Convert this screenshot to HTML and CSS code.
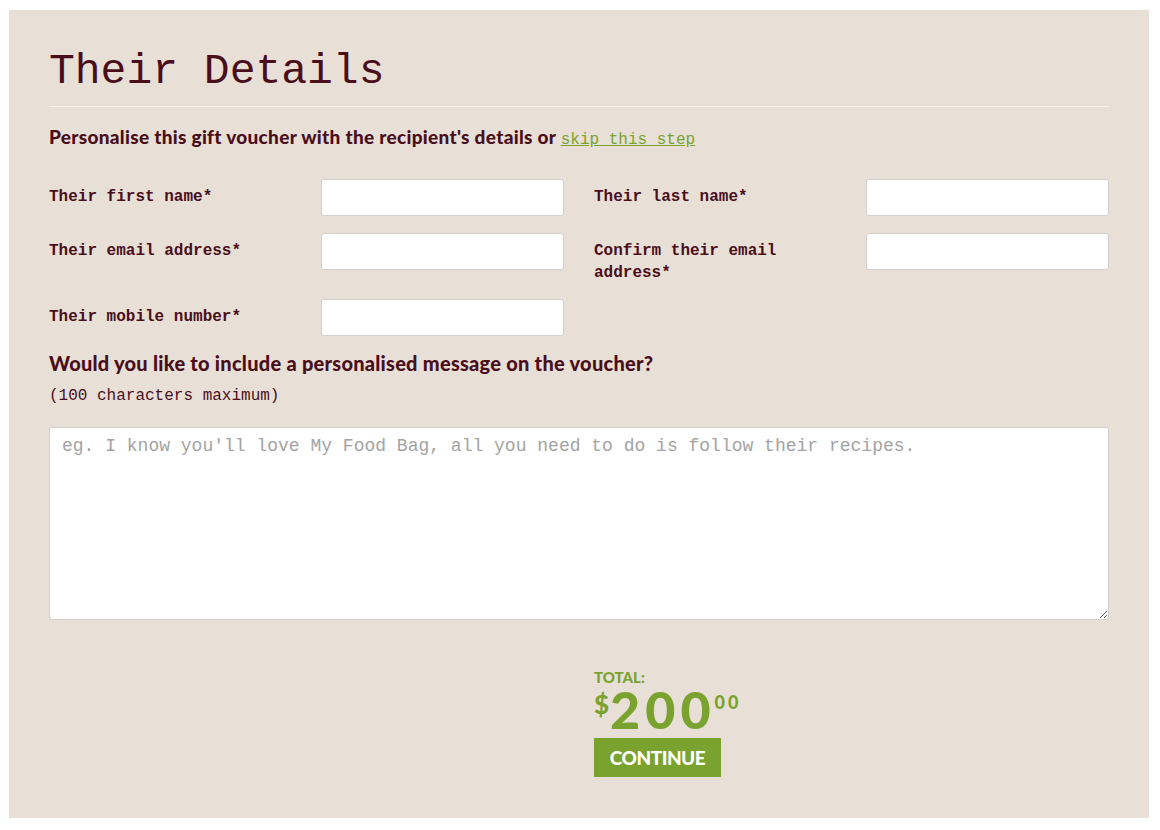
FILE: index.html
```html
<!DOCTYPE html>
<html lang="en">
<head>
    <meta charset="UTF-8">
    <meta name="viewport" content="width=device-width, initial-scale=1.0">
    <title>Their Details</title>
    <link rel="stylesheet" href="styles.css">
</head>
<body>

<div class="panel">
    <h1 class="title">Their Details</h1>
    <p class="intro">Personalise this gift voucher with the recipient's details or <a href="#" class="skip-link">skip this step</a></p>

    <div class="fields">
        <div class="field">
            <label for="first-name">Their first name*</label>
            <input type="text" id="first-name">
        </div>
        <div class="field">
            <label for="last-name">Their last name*</label>
            <input type="text" id="last-name">
        </div>
        <div class="field">
            <label for="email">Their email address*</label>
            <input type="email" id="email">
        </div>
        <div class="field">
            <label for="email-confirm">Confirm their email address*</label>
            <input type="email" id="email-confirm">
        </div>
        <div class="field">
            <label for="mobile">Their mobile number*</label>
            <input type="tel" id="mobile">
        </div>
    </div>

    <h2 class="message-title">Would you like to include a personalised message on the voucher?</h2>
    <p class="hint">(100 characters maximum)</p>
    <textarea class="message" maxlength="100" placeholder="eg. I know you'll love My Food Bag, all you need to do is follow their recipes."></textarea>

    <div class="summary">
        <div class="total-label">TOTAL:</div>
        <div class="price"><span class="currency">$</span><span class="dollars">200</span><span class="cents">00</span></div>
        <button class="continue-button">CONTINUE</button>
    </div>
</div>

</body>
</html>
```

FILE: styles.css
```css
body { margin: 0; padding: 10px 11px 12px 9px; background: #fff; font-family: "Liberation Mono", "Courier New", monospace; color: #4a0e1b; }
.panel { background: #e8e0d6; padding: 40px 40px 41px; }
.title { font-family: "Liberation Mono", "Courier New", monospace; font-weight: normal; font-size: 43px; line-height: 44px; margin: 0; padding-bottom: 12px; border-bottom: 1px solid #f6f3ef; color: #4a0e1b; }
.intro { font-family: Lato, "Open Sans", sans-serif; font-weight: 900; font-size: 19px; line-height: 24px; letter-spacing: 0.3px; margin: 18px 0 0; }
.skip-link { font-family: "Liberation Mono", "Courier New", monospace; font-weight: normal; font-size: 16px; line-height: 0; letter-spacing: 0; color: #7aa22e; text-decoration: underline; }

.fields { display: grid; grid-template-columns: 1fr 1fr; column-gap: 30px; row-gap: 17px; margin-top: 30px; }
.field { display: grid; grid-template-columns: 272px 1fr; align-items: start; }
.field label { font-weight: bold; font-size: 16px; line-height: 22px; padding-top: 7px; padding-right: 60px; margin-bottom: -2px; }
.field input { height: 37px; box-sizing: border-box; border: 1px solid #d2d0cd; border-radius: 3px; background: #fff; font: 16px "Liberation Mono", monospace; padding: 0 10px; }

.message-title { font-family: Lato, "Open Sans", sans-serif; font-weight: 900; font-size: 20px; line-height: 26px; letter-spacing: 0.25px; margin: 14px 0 0; }
.hint { font-size: 16px; line-height: 20px; margin: 10px 0 0; }
.message { display: block; width: 100%; height: 193px; box-sizing: border-box; margin-top: 21px; padding: 8px 12px; border: 1px solid #d2d0cd; border-radius: 3px; background: #fff; font: 18px/20px "Liberation Mono", "Courier New", monospace; color: #333; resize: vertical; }
.message::placeholder { color: #a3a3a3; }

.summary { padding-left: calc(50% + 15px); margin-top: 48px; font-family: Lato, "Open Sans", sans-serif; color: #7aa22e; }
.total-label { font-weight: 900; font-size: 15px; line-height: 18px; }
.price { display: flex; align-items: flex-start; font-weight: 900; margin-top: 1px; }
.currency { font-size: 26px; line-height: 1; margin-top: 4px; margin-right: 1px; }
.dollars { font-size: 52px; line-height: 44px; letter-spacing: 5px; }
.cents { font-size: 18px; line-height: 1; letter-spacing: 3px; margin-top: 6px; margin-left: -1px; }
.continue-button { display: block; margin-top: 7px; width: 127px; height: 39px; border: none; background: #7aa22e; color: #fff; font-family: Lato, "Open Sans", sans-serif; font-weight: 900; font-size: 19px; letter-spacing: -0.5px; cursor: pointer; padding: 0; }
```
